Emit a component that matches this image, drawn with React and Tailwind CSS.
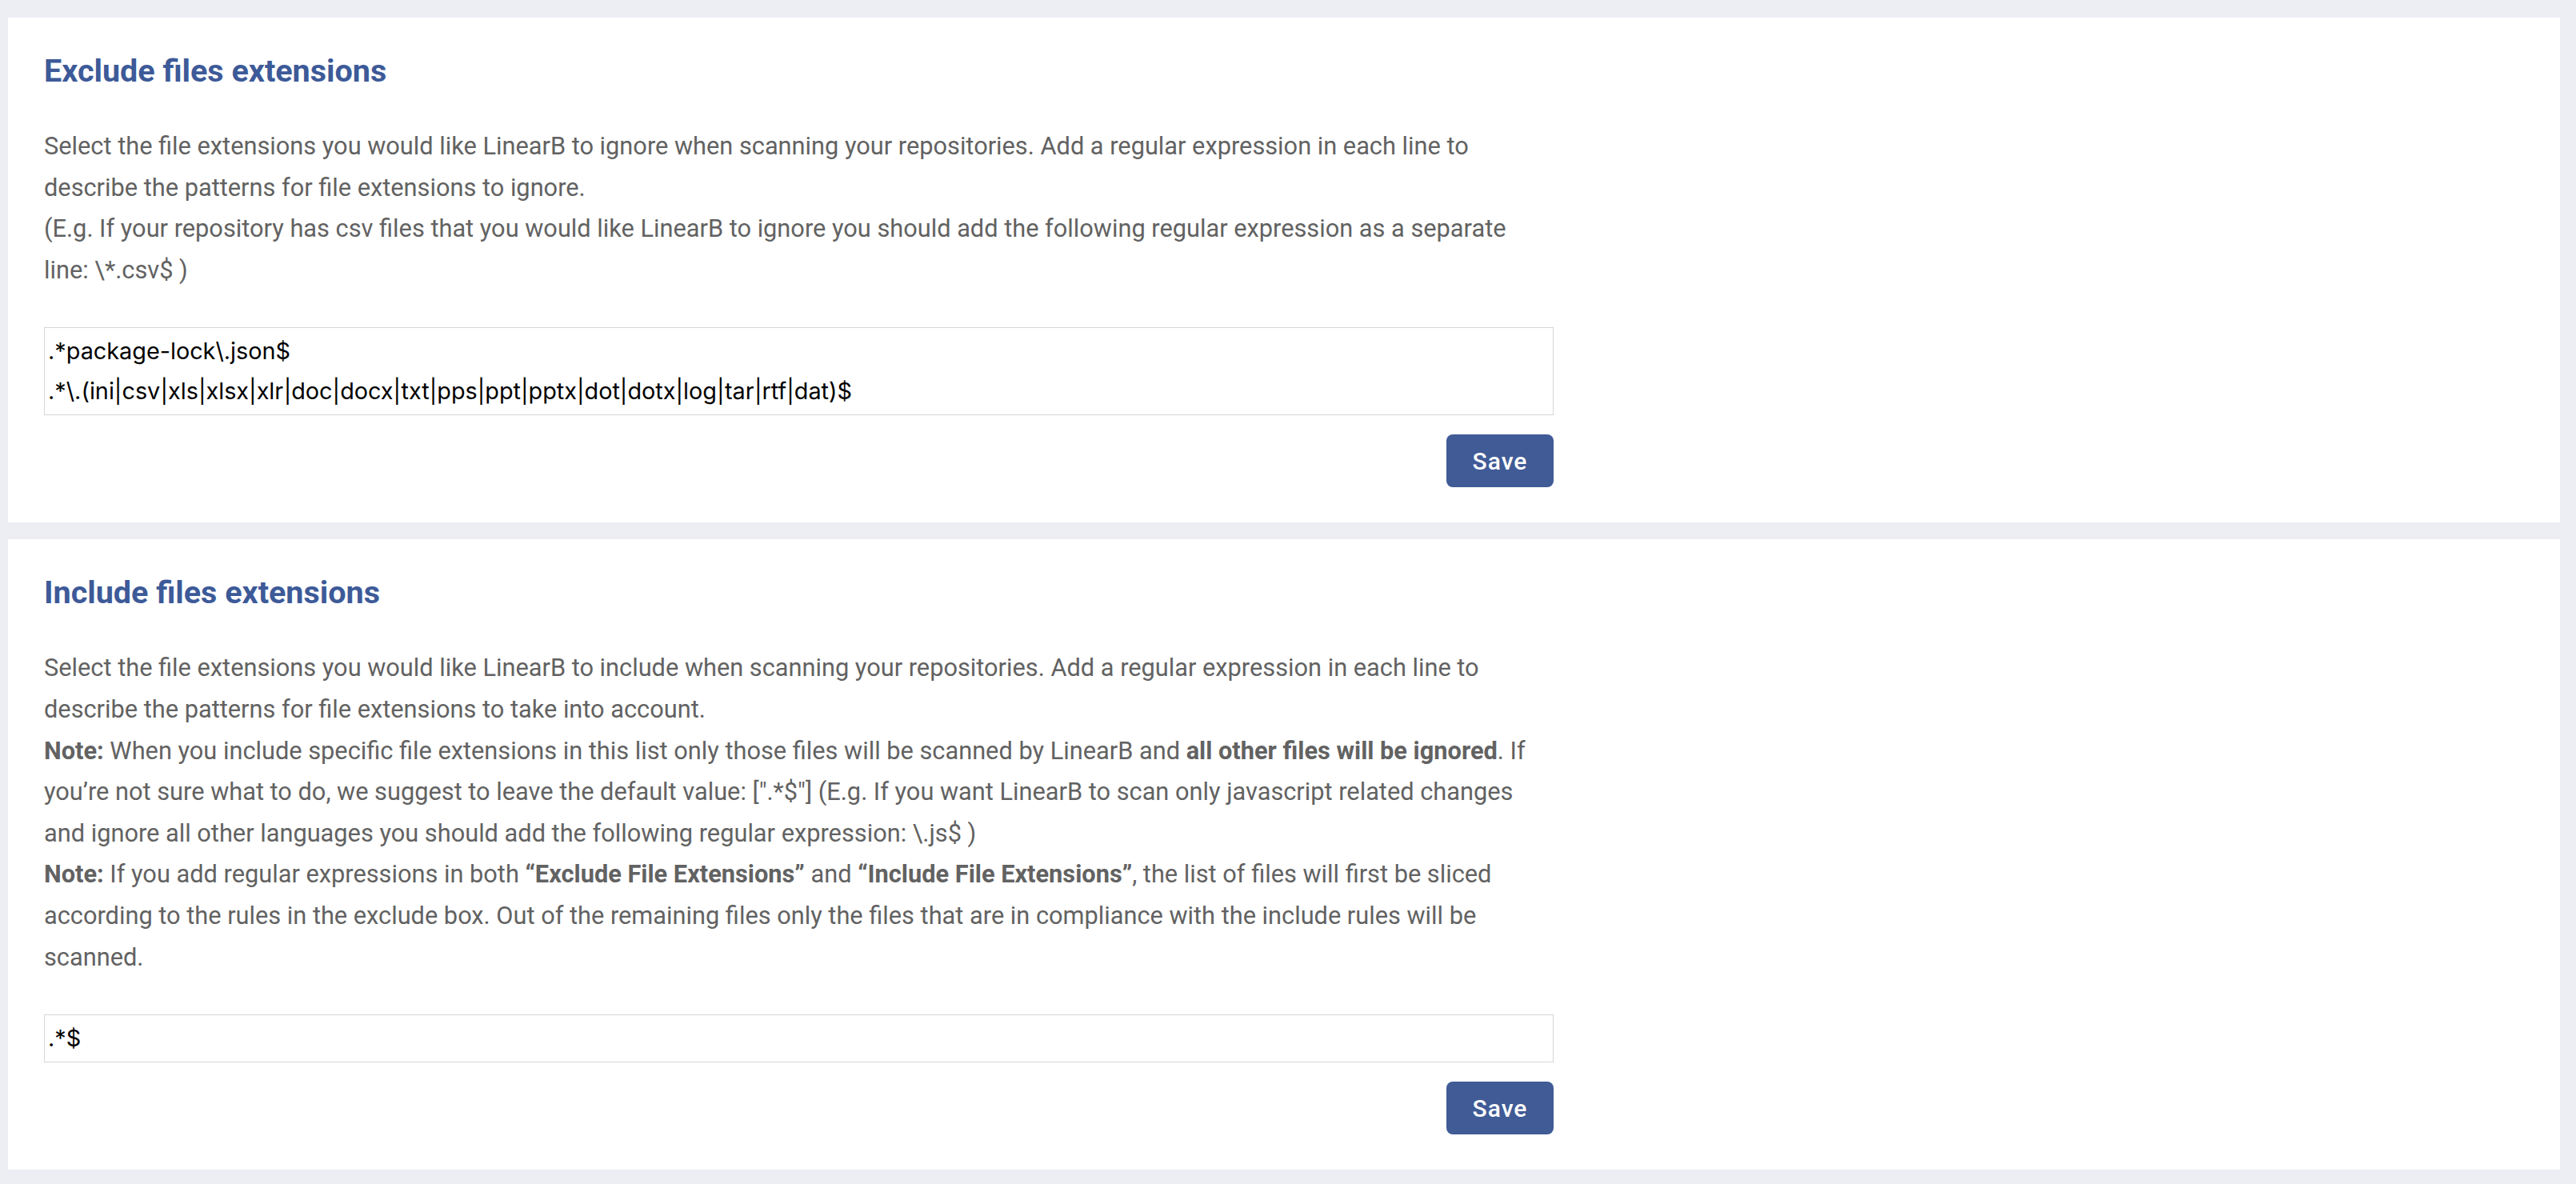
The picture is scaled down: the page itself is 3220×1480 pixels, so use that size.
import React, { useState } from "react";

const SettingsCard = ({ title, children, defaultValue, rows }) => {
  const [value, setValue] = useState(defaultValue);

  return (
    <section className="bg-white pt-[43px] px-[45px] pb-[44px]">
      <div className="w-[1887px]">
        <h2 className="text-[39.5px] leading-[47px] font-bold text-[#3d5a98] mb-[45px]">
          {title}
        </h2>
        <div className="text-[30.75px] leading-[51.6px] text-[#626262] mb-[46px]">
          {children}
        </div>
        <textarea
          value={value}
          onChange={(e) => setValue(e.target.value)}
          rows={rows}
          className="block w-full resize-none border border-[#d6d6d6] px-[4px] py-[4px] text-[28.8px] leading-[50px] text-black outline-none"
          style={{ fontFamily: "Inter, 'Liberation Sans', sans-serif" }}
        />
        <div className="flex justify-end mt-[24px]">
          <button className="h-[66px] w-[134px] rounded-[8px] bg-[#405b96] text-white text-[30px] font-medium tracking-[1px] hover:bg-[#34497a]">
            Save
          </button>
        </div>
      </div>
    </section>
  );
};

export default function App() {
  return (
    <div
      className="min-h-screen bg-[#eceef3] pl-[10px] pr-[20px] pt-[22px] pb-[18px] flex flex-col gap-[21px]"
      style={{ fontFamily: "Roboto, 'Noto Sans', sans-serif" }}
    >
      {/* Exclude */}
      <SettingsCard
        title="Exclude files extensions"
        rows={2}
        defaultValue={".*package-lock\\.json$\n.*\\.(ini|csv|xls|xlsx|xlr|doc|docx|txt|pps|ppt|pptx|dot|dotx|log|tar|rtf|dat)$"}
      >
        <p>
          Select the file extensions you would like LinearB to ignore when scanning your
          repositories. Add a regular expression in each line to describe the patterns for file
          extensions to ignore.
        </p>
        <p>
          (E.g. If your repository has csv files that you would like LinearB to ignore you should
          add the following regular expression as a separate line: \*.csv$ )
        </p>
      </SettingsCard>

      {/* Include */}
      <SettingsCard title="Include files extensions" rows={1} defaultValue=".*$">
        <p>
          Select the file extensions you would like LinearB to include when scanning your
          repositories. Add a regular expression in each line to describe the patterns for file
          extensions to take into account.
        </p>
        <p>
          <b>Note:</b> When you include specific file extensions in this list only those files will
          be scanned by LinearB and <b>all other files will be ignored</b>. If you’re not sure what
          to do, we suggest to leave the default value: [".*$"] (E.g. If you want LinearB to scan
          only javascript related changes and ignore all other languages you should add the
          following regular expression: \.js$ )
        </p>
        <p>
          <b>Note:</b> If you add regular expressions in both <b>“Exclude File Extensions”</b> and{" "}
          <b>“Include File Extensions”</b>, the list of files will first be sliced according to the
          rules in the exclude box. Out of the remaining files only the files that are in compliance
          with the include rules will be scanned.
        </p>
      </SettingsCard>
    </div>
  );
}
